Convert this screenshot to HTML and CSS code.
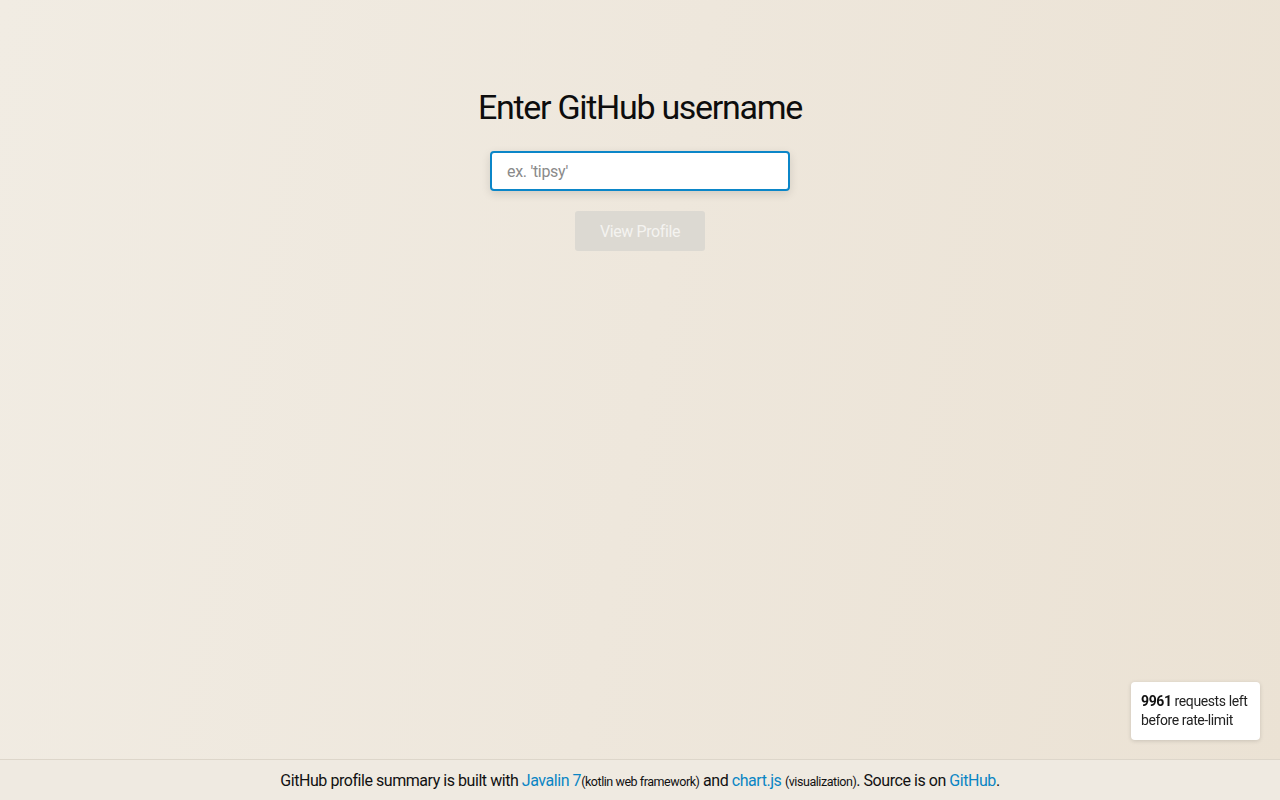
FILE: index.html
```html
<!DOCTYPE html>
<html lang="en">
<head>
<meta charset="utf-8">
<title>GitHub profile summary</title>
<link rel="stylesheet" href="styles.css">
</head>
<body>
<main class="page">
  <h1 class="title">Enter GitHub username</h1>
  <form class="search">
    <input class="search-input" type="text" placeholder="ex. 'tipsy'" autofocus>
    <button class="search-btn" type="button" disabled>View Profile</button>
  </form>
</main>
<div class="rate-limit"><strong>9961</strong> requests left<br>before rate-limit</div>
<footer class="footer">
  GitHub profile summary is built with <a href="#">Javalin 7</a><small>(kotlin web framework)</small> and <a href="#">chart.js</a> <small>(visualization)</small>. Source is on <a href="#">GitHub</a>.
</footer>
</body>
</html>
```
FILE: styles.css
```css
html, body {
  margin: 0;
  height: 100%;
}
body {
  font-family: "Roboto", "Liberation Sans", sans-serif;
  color: #111;
  background: linear-gradient(100deg, #f1ece3 0%, #eee7dc 50%, #ebe2d4 100%);
  display: flex;
  flex-direction: column;
  min-height: 800px;
}
.page {
  flex: 1;
  display: flex;
  flex-direction: column;
  align-items: center;
  padding-top: 85px;
}
.title {
  margin: 0;
  font-weight: 400;
  font-size: 34px;
  line-height: 44px;
  letter-spacing: -1.3px;
  color: #0d0d0d;
}
.search {
  display: flex;
  flex-direction: column;
  align-items: center;
  margin-top: 22px;
}
.search-input {
  box-sizing: border-box;
  width: 300px;
  height: 40px;
  border: 2px solid #0b86c8;
  border-radius: 4px;
  background: #fff;
  padding: 0 15px;
  font-family: inherit;
  font-size: 16px;
  letter-spacing: -0.3px;
  color: #333;
  outline: none;
  box-shadow: 0 3px 10px rgba(0, 0, 0, 0.12);
}
.search-input::placeholder {
  color: #8a8a8a;
}
.search-btn {
  margin-top: 20px;
  width: 130px;
  height: 40px;
  border: none;
  border-radius: 3px;
  background: #dcd9d2;
  color: #f4f3f0;
  font-family: inherit;
  font-size: 16px;
  letter-spacing: -0.4px;
}
.rate-limit {
  position: fixed;
  right: 20px;
  bottom: 60px;
  width: 129px;
  box-sizing: border-box;
  padding: 10px 10px;
  background: #fff;
  border-radius: 4px;
  box-shadow: 0 1px 4px rgba(0, 0, 0, 0.15);
  font-size: 14px;
  line-height: 19px;
  letter-spacing: -0.4px;
  color: #222;
  white-space: nowrap;
}
.rate-limit strong {
  font-weight: 700;
  color: #111;
}
.footer {
  height: 40px;
  border-top: 1px solid #ddd6ca;
  background: #efeae1;
  text-align: center;
  line-height: 42px;
  font-size: 16px;
  letter-spacing: -0.45px;
  color: #111;
}
.footer a {
  color: #0a85c4;
  text-decoration: none;
}
.footer small {
  font-size: 12.5px;
}
```
